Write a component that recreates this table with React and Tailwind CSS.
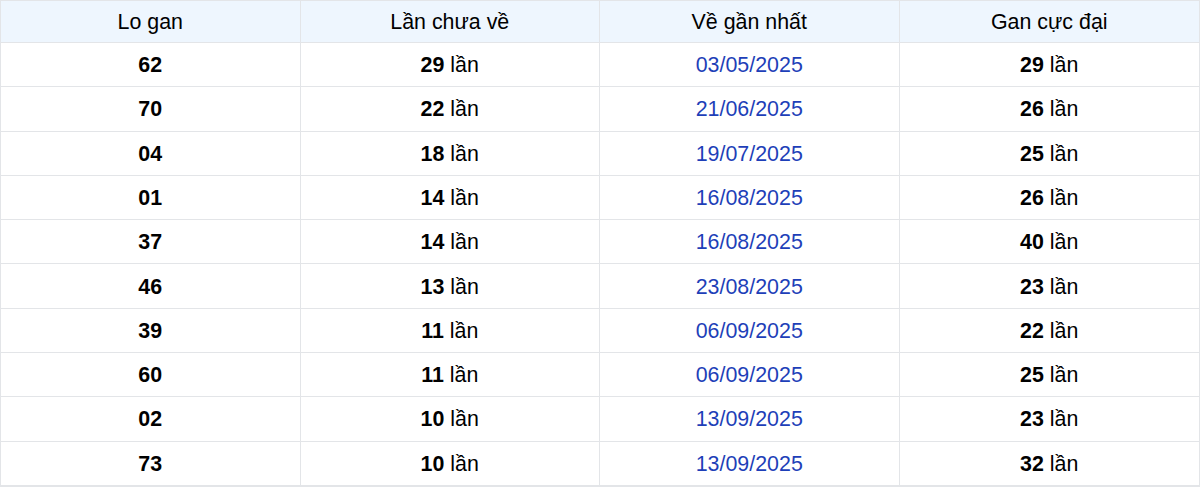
import React from 'react';

const rows = [
  ['62', '29', '03/05/2025', '29'],
  ['70', '22', '21/06/2025', '26'],
  ['04', '18', '19/07/2025', '25'],
  ['01', '14', '16/08/2025', '26'],
  ['37', '14', '16/08/2025', '40'],
  ['46', '13', '23/08/2025', '23'],
  ['39', '11', '06/09/2025', '22'],
  ['60', '11', '06/09/2025', '25'],
  ['02', '10', '13/09/2025', '23'],
  ['73', '10', '13/09/2025', '32'],
];

const headers = ['Lo gan', 'Lần chưa về', 'Về gần nhất', 'Gan cực đại'];

const Cell = ({ children, last }) => (
  <div
    className={
      'flex items-center justify-center pt-px ' + (last ? '' : 'border-r border-[#e3e5e8]')
    }
  >
    {children}
  </div>
);

const Times = ({ n }) => (
  <span>
    <b className="font-bold">{n}</b> lần
  </span>
);

export default function App() {
  return (
    <div
      className="w-[1200px] bg-white text-[21.4px] text-black border border-[#e3e5e8]"
      style={{ fontFamily: '"Liberation Sans", Arial, sans-serif' }}
    >
      <div className="grid grid-cols-4 h-[42px] bg-[#eef6fe] border-b border-[#e3e5e8]">
        {headers.map((h, i) => (
          <Cell key={h} last={i === 3}>
            {h}
          </Cell>
        ))}
      </div>
      {rows.map((r, i) => (
        <div key={i} className="grid grid-cols-4 h-[44.3px] border-b border-[#e3e5e8]">
          <Cell>
            <b className="font-bold">{r[0]}</b>
          </Cell>
          <Cell>
            <Times n={r[1]} />
          </Cell>
          <Cell>
            <span className="text-[#1e3fb8]">{r[2]}</span>
          </Cell>
          <Cell last>
            <Times n={r[3]} />
          </Cell>
        </div>
      ))}
    </div>
  );
}
